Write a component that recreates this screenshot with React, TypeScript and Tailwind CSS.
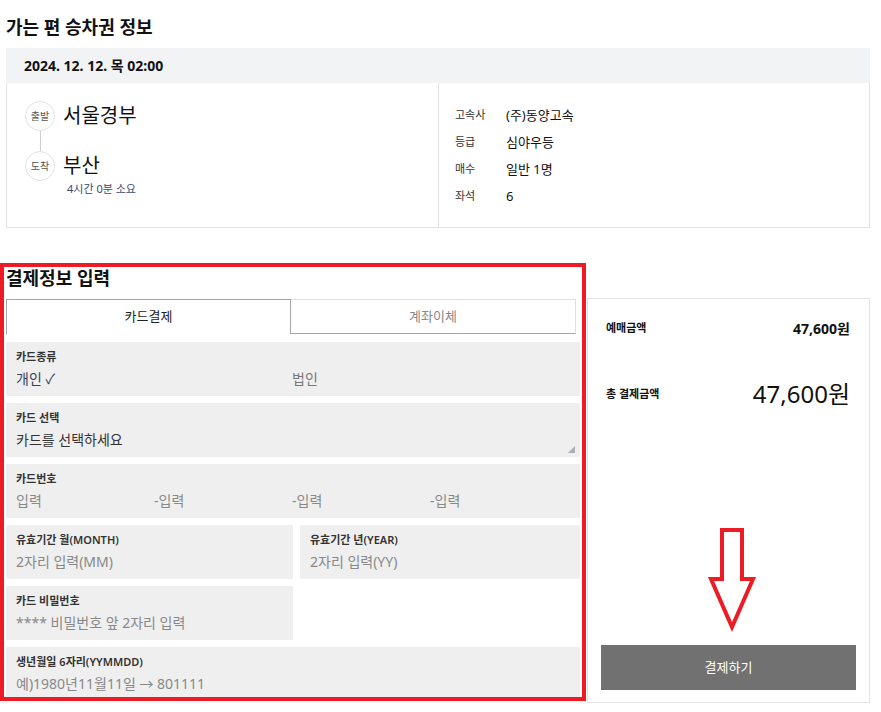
import { Fragment } from 'react';

const font = "font-['Noto_Sans','Noto_Sans_CJK_KR',sans-serif]";

function Field({ label, className = '', children }: { label: string; className?: string; children: React.ReactNode }) {
    return (
        <div className={`relative h-[54px] bg-[#efefef] pl-[10px] pt-[8px] ${className}`}>
            <p className="text-[11px] leading-[14px] font-semibold text-[#333]">{label}</p>
            <div className="mt-[5px] text-[14px] leading-[20px]">{children}</div>
        </div>
    );
}

export default function App() {
    const infoRows = [
        ['고속사', '(주)동양고속'],
        ['등급', '심야우등'],
        ['매수', '일반 1명'],
        ['좌석', '6'],
    ];

    return (
        <div className={`relative w-[881px] h-[712px] overflow-hidden bg-white text-[#111] ${font}`}>
            <h1 className="pl-[6px] pt-[15px] h-[48px] text-[18px] leading-[24px] font-bold">가는 편 승차권 정보</h1>

            <div className="mx-[6px] w-[864px]">
                <div className="h-[35px] bg-[#f2f3f5] pl-[18px] flex items-center text-[14px] font-bold">
                    2024. 12. 12. 목 02:00
                </div>
                <div className="h-[145px] border border-t-0 border-[#e3e3e3] flex">
                    <div className="w-[431px] pl-[18px] pt-[18px]">
                        <div className="flex items-center gap-[8px]">
                            <div className="w-[30px] h-[30px] rounded-full border border-[#e2e2e2] flex items-center justify-center text-[10px] text-[#555]">출발</div>
                            <span className="text-[20px] leading-[28px]">서울경부</span>
                        </div>
                        <div className="ml-[14.5px] w-px h-[20px] bg-[#cfcfcf]" />
                        <div className="flex items-center gap-[8px]">
                            <div className="w-[30px] h-[30px] rounded-full border border-[#e2e2e2] flex items-center justify-center text-[10px] text-[#555]">도착</div>
                            <span className="text-[20px] leading-[28px]">부산</span>
                        </div>
                        <p className="ml-[42px] mt-[1px] text-[11px] leading-[14px] text-[#3b4a6e]">4시간 0분 소요</p>
                    </div>
                    <div className="flex-1 border-l border-[#e3e3e3] pl-[16px] pt-[19px]">
                        {infoRows.map(([k, v]) => (
                            <div key={k} className="flex items-center h-[27px]">
                                <span className="w-[51px] text-[11px] text-[#333]">{k}</span>
                                <span className="text-[13px] text-[#111]">{v}</span>
                            </div>
                        ))}
                    </div>
                </div>
            </div>

            <div className="mt-[38px] flex">
                <div className="ml-[6px] w-[574px]">
                    <h2 className="h-[24px] text-[18px] leading-[24px] font-bold mb-[9px]">결제정보 입력</h2>
                    <div className="flex w-[570px] h-[35px] text-[13px]">
                        <div className="w-[285px] border border-b-0 border-[#a3a3b3] bg-white flex items-center justify-center text-[#222]">카드결제</div>
                        <div className="flex-1 border-t border-r border-t-[#e0e0e0] border-r-[#e0e0e0] border-b border-b-[#a3a3b3] flex items-center justify-center text-[#888]">계좌이체</div>
                    </div>

                    <div className="mt-[8px] flex flex-col gap-[7px]">
                        <Field label="카드종류">
                            <div className="flex">
                                <span className="w-[276px] text-[#34405c]">개인 ✓</span>
                                <span className="text-[#777]">법인</span>
                            </div>
                        </Field>
                        <Field label="카드 선택">
                            <span className="text-[#333]">카드를 선택하세요</span>
                            <svg className="absolute right-[5px] bottom-[4px]" width="7" height="7" viewBox="0 0 7 7">
                                <path d="M7 0 L7 7 L0 7 Z" fill="#a9aebb" />
                            </svg>
                        </Field>
                        <Field label="카드번호">
                            <div className="grid grid-cols-[138px_138px_138px_138px] text-[#888]">
                                {['입력', '-입력', '-입력', '-입력'].map((t, i) => (
                                    <Fragment key={i}>
                                        <span>{t}</span>
                                    </Fragment>
                                ))}
                            </div>
                        </Field>
                        <div className="grid grid-cols-[287px_280px] gap-[7px]">
                            <Field label="유효기간 월(MONTH)">
                                <span className="text-[#888]">2자리 입력(MM)</span>
                            </Field>
                            <Field label="유효기간 년(YEAR)">
                                <span className="text-[#888]">2자리 입력(YY)</span>
                            </Field>
                            <Field label="카드 비밀번호">
                                <span className="text-[#888]">**** 비밀번호 앞 2자리 입력</span>
                            </Field>
                        </div>
                        <Field label="생년월일 6자리(YYMMDD)">
                            <span className="text-[#888]">예)1980년11월11일 → 801111</span>
                        </Field>
                    </div>
                </div>

                <div className="ml-[7px] mt-[32px] w-[283px] h-[405px] border border-[#e3e3e3] flex flex-col px-[18px]">
                    <div className="mt-[19px] flex items-center justify-between h-[20px]">
                        <span className="text-[11px] font-bold">예매금액</span>
                        <span className="text-[14px] font-bold pr-px">47,600원</span>
                    </div>
                    <div className="mt-[41px] flex items-center justify-between h-[30px]">
                        <span className="text-[11px] font-bold">총 결제금액</span>
                        <span className="text-[24px] pr-px">47,600원</span>
                    </div>
                    <button className="mt-auto mb-[12px] -mx-[5px] h-[45px] bg-[#717171] text-white text-[13px]">결제하기</button>
                </div>
            </div>

            <svg className="absolute left-0 top-0 pointer-events-none" width="881" height="712">
                <path d="M722 530 L742 530 L742 579 L753 579 L732 627 L711 579 L722 579 Z" fill="none" stroke="#ed1c24" strokeWidth="4" strokeLinejoin="miter" />
            </svg>
            <div className="absolute left-0 top-[263px] w-[586px] h-[438px] border-4 border-[#ed1c24] pointer-events-none" />
        </div>
    );
}
